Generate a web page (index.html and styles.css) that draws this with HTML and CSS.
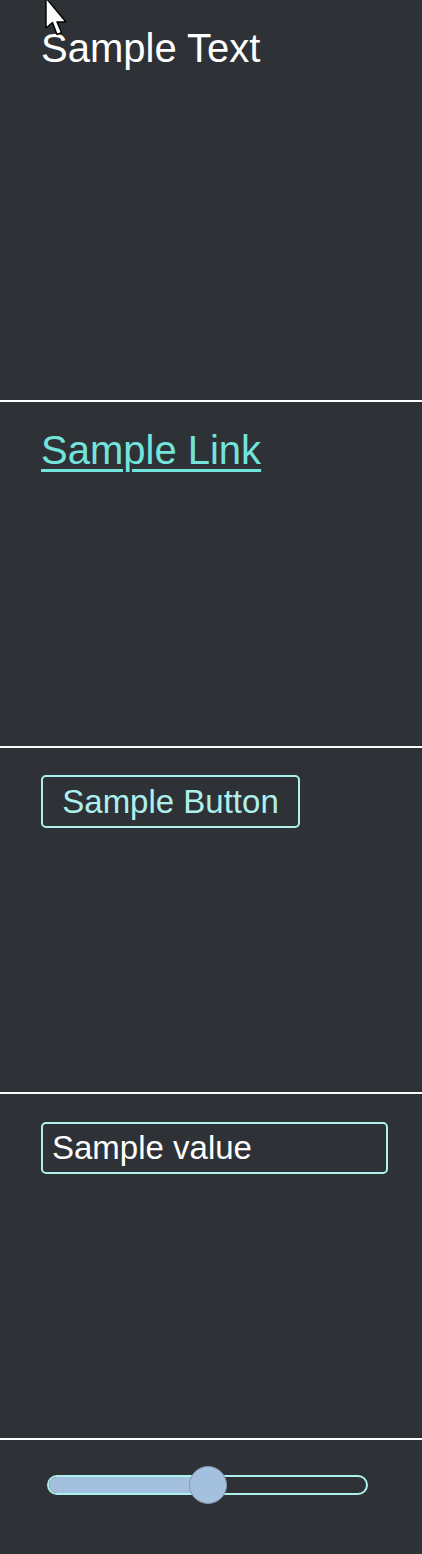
FILE: index.html
```html
<!DOCTYPE html>
<html>
<head>
<meta charset="utf-8">
<link rel="stylesheet" href="styles.css">
</head>
<body>
<main class="page">
  <section class="panel panel-first">
    <p class="sample-text">Sample Text</p>
  </section>
  <section class="panel">
    <a class="sample-link" href="#">Sample Link</a>
  </section>
  <section class="panel">
    <button class="sample-button" type="button">Sample Button</button>
  </section>
  <section class="panel">
    <div class="sample-input">Sample value</div>
  </section>
  <section class="panel panel-last">
    <div class="slider">
      <div class="slider-fill" style="width: 50%"></div>
      <div class="slider-thumb" style="left: 50%"></div>
    </div>
  </section>
</main>
<svg class="cursor" width="26" height="40" viewBox="0 0 26 40">
  <path d="M1 -2 L1 28 L7.5 22.5 L12 34.5 L16.5 32.6 L12 22 L21 22 Z" fill="#ffffff" stroke="#000000" stroke-width="1.4" stroke-linejoin="round"/>
</svg>
</body>
</html>
```
FILE: styles.css
```css
html, body {
  margin: 0;
  padding: 0;
  background: #2e3237;
}
body {
  font-family: "Liberation Sans", Arial, sans-serif;
  position: relative;
  overflow: hidden;
}
.page {
  display: flex;
  flex-direction: column;
}
.panel {
  box-sizing: border-box;
  height: 346px;
  padding: 27px 41px 0;
  border-bottom: 2px solid #ffffff;
}
.panel-first {
  height: 402px;
}
.panel-last {
  height: 114px;
  border-bottom: none;
  padding: 35px 0 0 47px;
}
.sample-text {
  margin: 0;
  color: #ffffff;
  font-size: 40px;
  line-height: 1.05;
}
.sample-link {
  display: inline-block;
  color: #72e4dc;
  font-size: 40px;
  line-height: 1.05;
  text-decoration: underline;
  text-decoration-thickness: 3px;
  text-underline-offset: 5px;
}
.sample-button {
  box-sizing: border-box;
  width: 259px;
  height: 53px;
  margin: 0;
  padding: 0;
  background: transparent;
  color: #aef0ee;
  border: 2px solid #aef0ee;
  border-radius: 5px;
  font-family: "Liberation Sans", Arial, sans-serif;
  font-size: 33px;
  line-height: 1;
}
.sample-input {
  box-sizing: border-box;
  width: 347px;
  height: 52px;
  margin-top: 1px;
  padding: 0 9px;
  display: flex;
  align-items: center;
  color: #ffffff;
  border: 2px solid #aef0ee;
  border-radius: 5px;
  font-size: 33px;
}
.slider {
  position: relative;
  box-sizing: border-box;
  width: 321px;
  height: 20px;
  border: 2px solid #aef0ee;
  border-radius: 10px;
}
.slider-fill {
  height: 100%;
  background: #a3c1df;
  border-radius: 8px 0 0 8px;
}
.slider-thumb {
  position: absolute;
  top: 50%;
  width: 38px;
  height: 38px;
  margin: -19px 0 0 -19px;
  box-sizing: border-box;
  border-radius: 50%;
  background: #a3c1df;
  border: 1px solid #8596aa;
}
.cursor {
  position: absolute;
  left: 45px;
  top: 0;
}
```
